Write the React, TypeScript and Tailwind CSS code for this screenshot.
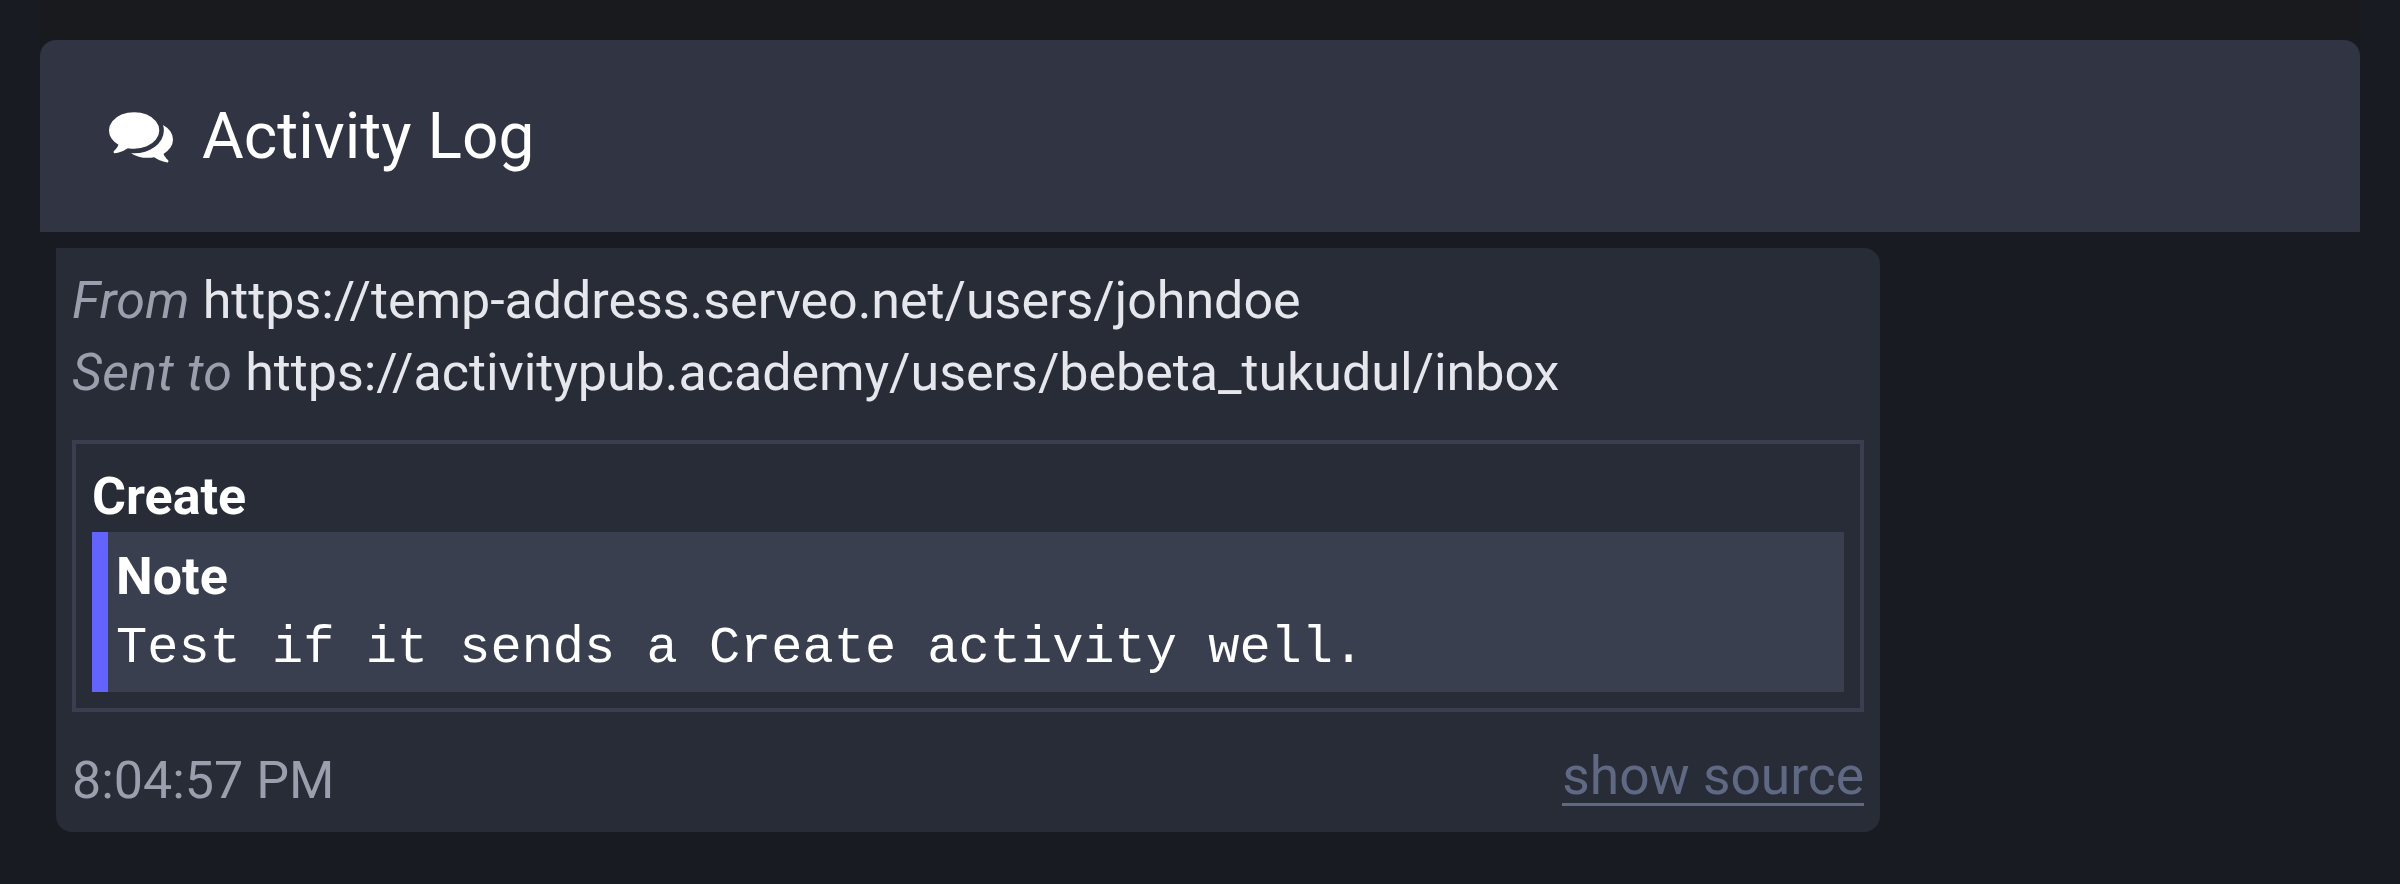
import React from "react";

function CommentsIcon() {
  return (
    <svg className="mt-[63px] mr-[29px] h-16 w-16 shrink-0" viewBox="0 0 1792 1792" fill="currentColor" aria-hidden="true">
      <path d="M1408 768q0 139-94 257t-256.500 186.500-353.500 68.500q-86 0-176-16-124 88-278 128-36 9-86 16h-3q-11 0-20.500-8t-11.500-21q-1-3-1-6.500t.5-6.500 2-6l2.500-5 3.500-5.500 4-5 4.500-5 4-4.500q5-6 23-25t26-29.500 22.500-29 25-38.500 20.500-44q-124-72-195-177t-71-224q0-139 94-257t256.500-186.500 353.500-68.500 353.500 68.500 256.500 186.500 94 257zm384 256q0 120-71 224.500t-195 176.500q10 24 20.500 44t25 38.500 22.500 29 26 29.500 23 25q1 1 4 4.500t4.500 5 4 5 3.500 5.500l2.500 5 2 6 .5 6.500-1 6.500q-3 14-13 22t-22 7q-50-7-86-16-154-40-278-128-90 16-176 16-271 0-472-132 58 4 88 4 161 0 309-45t264-129q125-92 192-212t67-254q0-77-23-152 129 71 204 178t75 230z" />
    </svg>
  );
}

function AddressLine({ label, url }: { label: string; url: string }) {
  return (
    <div className="tracking-[-0.033px] whitespace-nowrap">
      <i className="tracking-[0.25px] text-[#9b9fad]">{label}</i> {url}
    </div>
  );
}

function Activity() {
  return (
    <article className="mt-4 ml-4 flex h-[584px] w-[1824px] flex-col rounded-2xl rounded-tl-none bg-[#282c37] px-4 pt-[17px] text-[52px] leading-[72px] text-[#e6e7ec]">
      <AddressLine label="From" url="https://temp-address.serveo.net/users/johndoe" />
      <AddressLine label="Sent to" url="https://activitypub.academy/users/bebeta_tukudul/inbox" />
      <section className="mt-[31px] h-[272px] border-4 border-[#393f4f] px-4 pt-[17px] text-white">
        <h2 className="h-[71px] font-bold">Create</h2>
        <div className="h-[160px] border-l-[16px] border-[#6364ff] bg-[#393f4f] pt-[9px] pl-2">
          <h3 className="h-[76px] font-bold">Note</h3>
          <p className="font-['Liberation_Mono',monospace] leading-[64px] whitespace-nowrap">Test if it sends a Create activity well.</p>
        </div>
      </section>
      <footer className="mt-8 flex items-start justify-between">
        <time className="mt-px text-[#9b9fad]">8:04:57 PM</time>
        <button className="mt-[7px] h-[55px] border-b-[3px] border-[#606984] pb-px text-[53.333px] leading-[51px] text-[#606984]">show source</button>
      </footer>
    </article>
  );
}

export default function App() {
  return (
    <div className="h-[884px] w-[2400px] overflow-hidden bg-[#191b22] px-10 font-[Roboto,sans-serif]">
      <div className="h-14 bg-[#191a1d]" />
      <header className="-mt-4 flex h-[192px] rounded-t-2xl bg-[#313543] pl-[69px] text-white">
        <CommentsIcon />
        <h1 className="pt-[61px] text-[64px] leading-[72px]">Activity Log</h1>
      </header>
      <Activity />
    </div>
  );
}
